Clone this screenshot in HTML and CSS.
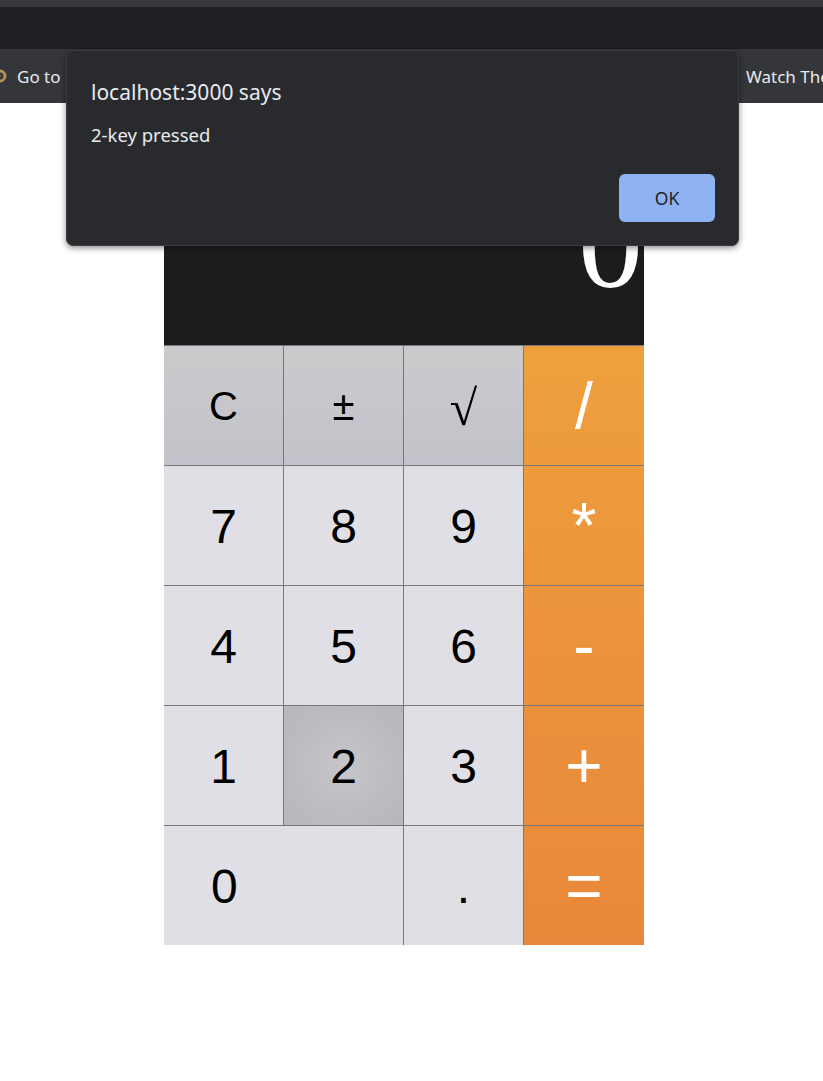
FILE: index.html
```html
<!DOCTYPE html>
<html lang="en">
<head>
<meta charset="utf-8">
<title>Calculator</title>
<link rel="stylesheet" href="styles.css">
</head>
<body>
<header class="chrome">
  <div class="tabstrip"></div>
  <div class="toolbar"></div>
  <nav class="bookmarks">
    <div class="bm bm-first">
      <svg class="bm-icon" width="16" height="16" viewBox="0 0 16 16"><circle cx="8" cy="8" r="5" fill="none" stroke="#b39158" stroke-width="3"/><circle cx="8" cy="8" r="1.5" fill="#6b5a3a"/></svg>
      <span>Go to</span>
    </div>
    <div class="bm bm-second">
      <svg class="bm-icon" width="16" height="16" viewBox="0 0 16 16"><rect x="0" y="1" width="16" height="14" rx="2" fill="#c4302b"/></svg>
      <span>Watch The</span>
    </div>
  </nav>
</header>

<main class="page">
  <div class="calc">
    <div class="display"><span class="display-value">0</span></div>
    <div class="keys">
      <div class="key key-fn">C</div>
      <div class="key key-fn">±</div>
      <div class="key key-fn key-sqrt">√</div>
      <div class="key key-op op-1">/</div>

      <div class="key">7</div>
      <div class="key">8</div>
      <div class="key">9</div>
      <div class="key key-op op-2">*</div>

      <div class="key">4</div>
      <div class="key">5</div>
      <div class="key">6</div>
      <div class="key key-op op-3">-</div>

      <div class="key">1</div>
      <div class="key key-pressed">2</div>
      <div class="key">3</div>
      <div class="key key-op op-4">+</div>

      <div class="key key-zero">0</div>
      <div class="key">.</div>
      <div class="key key-op op-5">=</div>
    </div>
  </div>
</main>

<div class="dialog" role="alertdialog">
  <div class="dialog-title">localhost:3000 says</div>
  <div class="dialog-message">2-key pressed</div>
  <div class="dialog-actions">
    <button class="dialog-ok">OK</button>
  </div>
</div>
</body>
</html>
```

FILE: styles.css
```css
* {
  box-sizing: border-box;
}

html, body {
  margin: 0;
  padding: 0;
  background: #ffffff;
  height: 100%;
}

body {
  font-family: "Liberation Sans", Arial, sans-serif;
  overflow: hidden;
}

/* ---------- browser chrome ---------- */
.chrome {
  display: flex;
  flex-direction: column;
}

.tabstrip {
  height: 7px;
  background: #38393c;
}

.toolbar {
  height: 42px;
  background: #202124;
}

.bookmarks {
  height: 54px;
  background: #35363a;
  display: flex;
  align-items: center;
  overflow: hidden;
  white-space: nowrap;
  font-family: "Noto Sans", "Open Sans", sans-serif;
  font-size: 17px;
  color: #e8eaed;
}

.bm {
  display: flex;
  align-items: center;
  gap: 9px;
  flex: 0 0 auto;
}

.bm-first {
  margin-left: -8px;
  width: 729px;
}

.bm-icon {
  flex: 0 0 auto;
}

/* ---------- page ---------- */
.page {
  padding-left: 164px;
}

.calc {
  width: 480px;
}

.display {
  height: 242px;
  background: #1c1b1e;
  display: flex;
  justify-content: flex-end;
  align-items: flex-end;
  padding-bottom: 37px;
  padding-right: 1px;
}

.display-value {
  font-family: "Liberation Serif", "Times New Roman", serif;
  font-size: 130px;
  line-height: 1;
  color: #ffffff;
}

.keys {
  display: grid;
  grid-template-columns: repeat(4, 120px);
  grid-auto-rows: 120px;
}

.key {
  display: flex;
  align-items: center;
  justify-content: center;
  border-top: 1px solid #78787c;
  border-right: 1px solid #78787c;
  background: #e0dfe5;
  color: #000000;
  font-size: 48px;
  padding-top: 1px;
}

.key-fn {
  background: linear-gradient(to bottom, #cbcbcd, #c3c2ca);
  font-size: 40px;
}

.key-sqrt {
  font-family: "Liberation Serif", "Times New Roman", serif;
  font-size: 50px;
  padding-top: 4px;
}

.key-pressed {
  background: radial-gradient(circle at 50% 50%, #c6c6c9 0%, #bcbbc0 60%, #b7b6bb 100%);
}

.key-zero {
  grid-column: span 2;
  justify-content: flex-start;
  padding-left: 47px;
}

.key-op {
  border-right: none;
  color: #ffffff;
  font-size: 64px;
}

.op-1 { background: linear-gradient(to bottom, #eea03e, #ed9b3d); }
.op-2 { background: linear-gradient(to bottom, #ed9b3d, #ec963c); }
.op-3 { background: linear-gradient(to bottom, #ec963c, #ea913c); }
.op-4 { background: linear-gradient(to bottom, #ea913c, #e98d3b); }
.op-5 { background: linear-gradient(to bottom, #e98d3b, #e8883a); }

/* ---------- alert dialog ---------- */
.dialog {
  position: absolute;
  left: 66px;
  top: 50px;
  width: 673px;
  height: 196px;
  background: #292a2d;
  border: 1px solid #3c3d41;
  border-radius: 7px;
  box-shadow: 0 2px 6px rgba(0, 0, 0, 0.45);
  padding: 25px 23px 23px 24px;
  font-family: "Noto Sans", "Open Sans", sans-serif;
  color: #e8eaed;
  display: flex;
  flex-direction: column;
}

.dialog-title {
  font-size: 21px;
  line-height: 32px;
}

.dialog-message {
  margin-top: 16px;
  font-size: 18.5px;
  line-height: 22px;
}

.dialog-actions {
  margin-top: 28px;
  display: flex;
  justify-content: flex-end;
}

.dialog-ok {
  width: 96px;
  height: 48px;
  border: none;
  border-radius: 6px;
  background: #8fb3f2;
  color: #202124;
  font-family: "Noto Sans", "Open Sans", sans-serif;
  font-size: 17.5px;
  padding: 0;
}
```
